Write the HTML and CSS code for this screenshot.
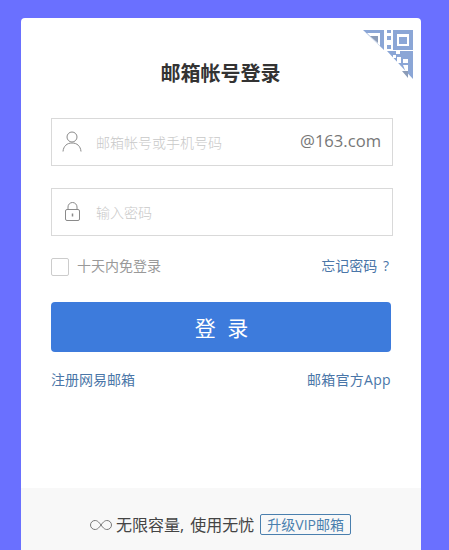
FILE: index.html
```html
<!DOCTYPE html>
<html lang="zh">
<head>
<meta charset="utf-8">
<title>邮箱帐号登录</title>
<link rel="stylesheet" href="styles.css">
</head>
<body>
<main class="card">
  <svg class="qr" width="56" height="56" viewBox="0 0 56 56">
    <path fill="#8ba6d6" d="M3 4H24V24ZM27 4H31V7H27ZM27 10H31V14H27ZM27 19H31V23H27ZM33 4H53V24H33ZM27 25H36V28H40V25H53V53Z"/>
    <path fill="#fff" d="M7 7H20V20ZM37 8H49V20H37ZM37 31H41V37H37ZM43 33H48V37H43ZM33 29H36V32H33ZM43 39H48V52Z"/>
    <path fill="#8b9cb8" d="M10 10H18V17ZM42 45H48V52Z"/>
    <path fill="#8ba6d6" d="M39 11H47V18H39Z"/>
  </svg>
  <div class="content">
    <h1 class="title">邮箱帐号登录</h1>
    <div class="field">
      <svg class="icon" width="20" height="22" viewBox="0 0 20 22" fill="none" stroke="#8a8a8a" stroke-width="1">
        <circle cx="10" cy="6" r="5"/>
        <path d="M1 20.500C1.500 15 5 12 10 12S18.500 15 19 20.500"/>
      </svg>
      <span class="placeholder">邮箱帐号或手机号码</span>
      <span class="suffix">@163.com</span>
    </div>
    <div class="field field-second">
      <svg class="icon" width="20" height="22" viewBox="0 0 20 22" fill="none" stroke="#8a8a8a" stroke-width="1">
        <rect x="3.500" y="8.500" width="14" height="11" rx="1.500"/>
        <path d="M6 8.500V6a4.500 4.500 0 0 1 9 0V8.500"/>
        <path d="M10.500 12.500v3" stroke-width="1.500"/>
      </svg>
      <span class="placeholder">输入密码</span>
    </div>
    <div class="options">
      <span class="remember"><span class="check"></span><span class="remember-text">十天内免登录</span></span>
      <a class="link forgot">忘记密码 ?</a>
    </div>
    <button class="submit" type="button">登 录</button>
    <div class="links">
      <a class="link">注册网易邮箱</a>
      <a class="link app">邮箱官方App</a>
    </div>
  </div>
  <footer class="promo">
    <svg width="24" height="12" viewBox="0 0 24 12" fill="none" stroke="#777" stroke-width="1">
      <path d="M12 6C9.500 2.500 8 1.500 6 1.500a4.500 4.500 0 0 0 0 9c2 0 3.500-1 6-4.500s4-4.500 6-4.500a4.500 4.500 0 0 1 0 9c-2 0-3.500-1-6-4.500Z"/>
    </svg>
    <span class="promo-text">无限容量, 使用无忧</span>
    <a class="vip">升级VIP邮箱</a>
  </footer>
</main>
</body>
</html>
```
FILE: styles.css
```css
* { box-sizing: border-box; }
html, body { margin: 0; height: 100%; }
body {
  background: #6a70ff;
  font-family: "Open Sans", "Noto Sans CJK SC", sans-serif;
  padding: 18px 28px 0 21px;
  overflow: hidden;
}
.card {
  position: relative;
  width: 400px;
  height: 532px;
  background: #fff;
  border-radius: 4px 4px 0 0;
  display: flex;
  flex-direction: column;
}
.qr { position: absolute; top: 8px; right: 5px; }
.content { flex: 1; padding: 0 28px 0 30px; }
.title {
  margin: 42px 0 0;
  height: 28px;
  line-height: 28px;
  font-size: 20px;
  font-weight: 700;
  color: #333;
  text-align: center;
  padding-right: 3px;
}
.field {
  display: flex;
  align-items: center;
  height: 48px;
  margin-top: 30px;
  border: 1px solid #d9d9d9;
  padding: 0 11px 0 10px;
}
.field-second { margin-top: 22px; }
.icon { flex: none; }
.placeholder {
  margin-left: 14px;
  padding-top: 2px;
  font-size: 14px;
  line-height: 20px;
  font-weight: 300;
  color: #c8c8c8;
  flex: 1;
}
.suffix {
  font-size: 16.600px;
  line-height: 20px;
  padding-bottom: 2px;
  color: #777;
}
.options {
  display: flex;
  justify-content: space-between;
  align-items: center;
  height: 18px;
  margin-top: 22px;
  padding-right: 4px;
}
.remember {
  display: flex;
  align-items: center;
  gap: 8px;
  font-size: 14px;
  color: #999;
}
.remember-text { line-height: 20px; padding-bottom: 2px; }
.check {
  width: 18px;
  height: 18px;
  border: 1px solid #ccc;
  border-radius: 2px;
}
.link {
  font-size: 14px;
  line-height: 20px;
  color: #4a76a8;
}
.forgot { word-spacing: 2px; padding-bottom: 2px; }
.app { letter-spacing: 0.300px; }
.submit {
  display: block;
  width: 340px;
  height: 50px;
  margin-top: 26px;
  padding: 0 0 0 4px;
  border: 0;
  border-radius: 4px;
  background: #3d7bdc;
  color: #fff;
  font-family: inherit;
  font-size: 21px;
  letter-spacing: 3px;
}
.links {
  display: flex;
  justify-content: space-between;
  width: 340px;
  margin-top: 18px;
  line-height: 22px;
}
.promo {
  height: 62px;
  background: #f8f8f8;
  display: flex;
  align-items: flex-start;
  justify-content: center;
  padding: 26px 2px 0 0;
  gap: 3px;
}
.promo svg { margin-top: 5px; }
.promo-text {
  font-size: 16px;
  word-spacing: 2px;
  line-height: 22px;
  color: #444;
}
.vip {
  margin-left: 3px;
  height: 21px;
  line-height: 19px;
  padding: 0 6px;
  border: 1px solid #4a7fae;
  border-radius: 2px;
  font-size: 14px;
  color: #4a7fae;
}
```
